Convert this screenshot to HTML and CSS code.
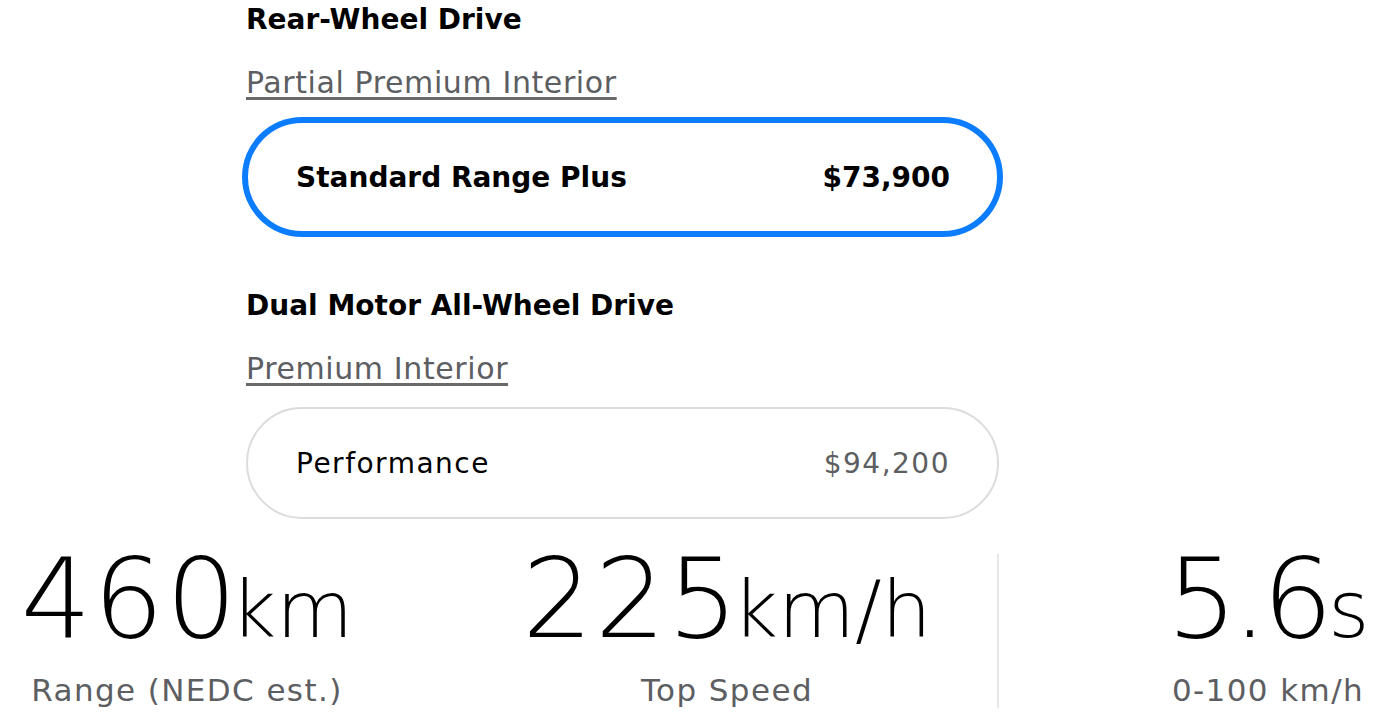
FILE: index.html
```html
<!DOCTYPE html>
<html lang="en">
<head>
  <meta charset="UTF-8" />
  <title>Model 3 Configurator</title>
  <link rel="stylesheet" href="styles.css">
</head>
<body>
  <div class="options">
    <h3 class="group-title">Rear-Wheel Drive</h3>
    <a class="interior-link" href="#">Partial Premium Interior</a>
    <button class="trim-card selected">
      <span class="trim-name">Standard Range Plus</span>
      <span class="trim-price">$73,900</span>
    </button>

    <h3 class="group-title second">Dual Motor All-Wheel Drive</h3>
    <a class="interior-link" href="#">Premium Interior</a>
    <button class="trim-card">
      <span class="trim-name">Performance</span>
      <span class="trim-price">$94,200</span>
    </button>
  </div>

  <div class="stats">
    <div class="stat">
      <div class="stat-value"><span class="num">460</span><span class="unit">km</span></div>
      <div class="stat-label">Range (NEDC est.)</div>
    </div>
    <div class="stat">
      <div class="stat-value"><span class="num">225</span><span class="unit">km/h</span></div>
      <div class="stat-label">Top Speed</div>
    </div>
    <div class="stat divided">
      <div class="stat-value"><span class="num decimal">5.6</span><span class="unit">s</span></div>
      <div class="stat-label">0-100 km/h</div>
    </div>
  </div>
</body>
</html>
```

FILE: styles.css
```css
/* Reset and base */
* {
  box-sizing: border-box;
}
body {
  margin: 0;
  background: #fff;
  color: #000;
  font-family: "DejaVu Sans", "Open Sans", sans-serif;
  overflow: hidden;
  height: 712px;
}

/* trim options */
.options {
  width: 1000px;
  padding-left: 246px;
}
.group-title {
  margin: 3px 0 0 0;
  font-size: 28px;
  line-height: 34px;
  font-weight: 700;
}
.group-title.second {
  margin-top: 56px;
}
.interior-link {
  display: block;
  width: fit-content;
  margin-top: 28px;
  font-size: 30px;
  line-height: 36px;
  color: #5c5e62;
  text-decoration: underline;
  text-decoration-color: #6a6a6a;
  text-decoration-thickness: 3px;
  text-underline-offset: 4px;
  letter-spacing: 0.6px;
}
.trim-card {
  display: flex;
  justify-content: space-between;
  align-items: center;
  width: 753px;
  height: 112px;
  margin-top: 20px;
  padding: 0 47px 0 48px;
  background: #fff;
  border: 2px solid #dcdcdc;
  border-radius: 56px;
  font-family: inherit;
  font-size: 28px;
  letter-spacing: 1.5px;
  color: #000;
  cursor: pointer;
}
.trim-card.selected {
  border-color: #0c7dff;
  box-shadow: 0 0 0 4px #0c7dff;
  letter-spacing: 0;
}
.trim-card.selected .trim-name,
.trim-card.selected .trim-price {
  font-weight: 700;
}
.trim-card .trim-price {
  color: #5c5e62;
}
.trim-card.selected .trim-price {
  color: #000;
}

/* stats row */
.stats {
  display: grid;
  grid-template-columns: 540px 540px 540px;
  margin-left: -83px;
  margin-top: 35px;
}
.stat {
  text-align: center;
}
.stat.divided {
  border-left: 2px solid #e8e8e8;
}
.stat-value {
  display: flex;
  justify-content: center;
  align-items: baseline;
  height: 92px;
  font-weight: 200;
}
.stat-value .num {
  font-size: 111px;
  line-height: 89px;
  letter-spacing: 2px;
  margin-right: -8px;
}
.stat-value .num.decimal {
  letter-spacing: -5px;
  margin-right: 0;
}
.stat-value .unit {
  font-size: 79px;
  line-height: 78px;
}
.stat-label {
  margin-top: 26px;
  font-size: 31px;
  line-height: 36px;
  color: #5c5e62;
  letter-spacing: 1.4px;
}
```
